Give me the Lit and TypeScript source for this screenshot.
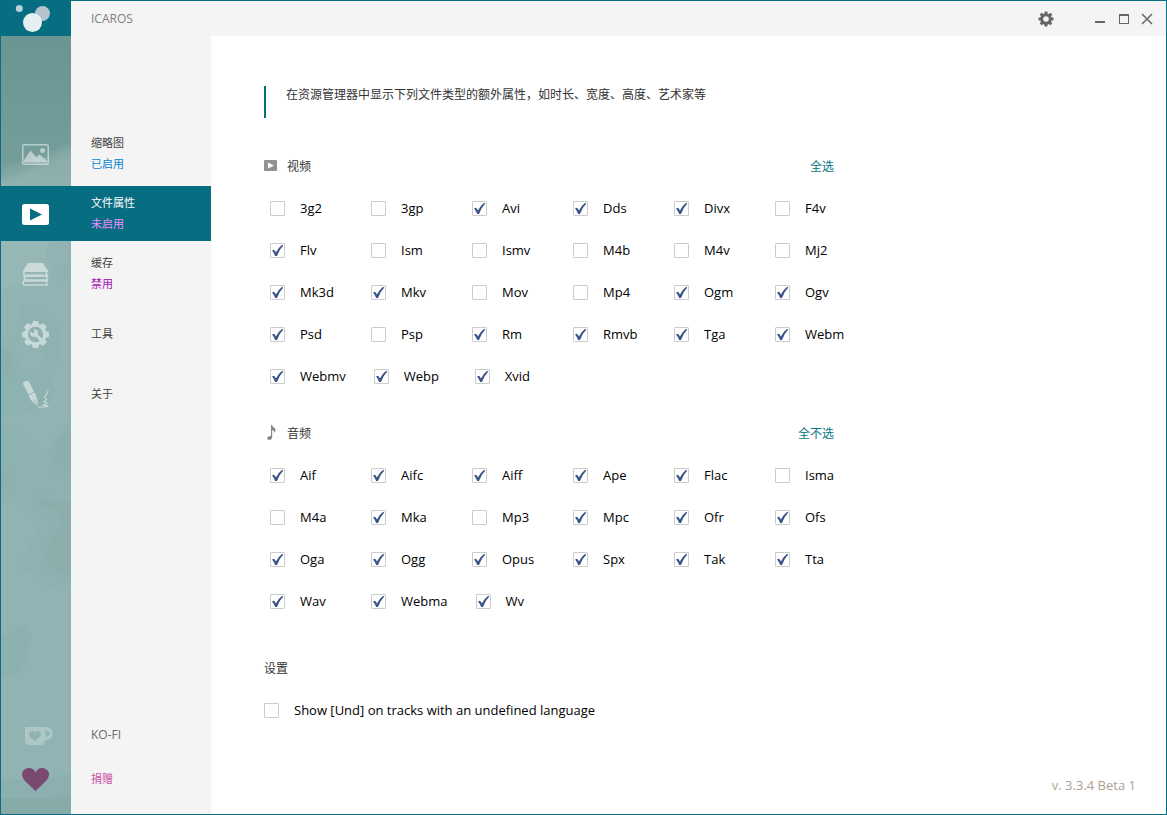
import { LitElement, html, css, svg, nothing } from "lit";
import type { TemplateResult } from "lit";
import { customElement, property, state } from "lit/decorators.js";
import { classMap } from "lit/directives/class-map.js";

interface Format {
  name: string;
  on: boolean;
}

/* "+" in front of a name means the format is ticked. */
const parse = (list: string): Format[] =>
  list.split(" ").map((n) => ({ name: n.replace("+", ""), on: n.startsWith("+") }));

const icons: Record<string, TemplateResult> = {
  image: html`<svg class="pale" width="27" height="21" viewBox="0 0 27 21">
    <rect x="0.75" y="0.75" width="25.5" height="19.5" rx="1.5" fill="none" stroke="#fff" stroke-width="1.5" />
    <path d="M2 18.500V16L8.500 6.500L14 13L17.500 10.500L25 16.500V18.500Z" fill="#fff" />
    <circle cx="20.500" cy="6.500" r="2.500" fill="#fff" />
  </svg>`,
  play: html`<svg width="27" height="21" viewBox="0 0 27 21">
    <rect width="27" height="21" rx="2.500" fill="#fff" />
    <path d="M8 4.500L20 10.500L8 16.500Z" fill="#076d80" />
  </svg>`,
  books: html`<svg class="pale" width="27" height="23" viewBox="0 0 27 23">
    <path d="M6 0H21L26 8H1Z" fill="#fff" />
    <g fill="none" stroke="#fff" stroke-width="1.500">
      <path d="M1 8.200H26M2.500 8.500Q0.500 12 3 12.200H26M24.500 8.500V12" />
      <path d="M26.500 13.200H4Q1.500 13.500 2.500 16Q2.800 17 4 17H26.500M25 13.500V17" />
      <path d="M26 18H3Q0.700 18.300 1 20.500Q1.300 22 3 22H26M24.500 18V22" />
    </g>
  </svg>`,
  tools: html`<svg class="pale" width="27" height="27" viewBox="-13.500 -13.500 27 27">
    <g fill="#fff">
      ${[0, 45, 90, 135, 180, 225, 270, 315].map(
        (a) => svg`<path transform="rotate(${a})" d="M-3.800 -9L-2.800 -12.800Q-2.500 -13.500 -1.800 -13.500H1.800Q2.500 -13.500 2.800 -12.800L3.800 -9Z" />`
      )}
      <path fill-rule="evenodd" d="M-10.700 0A10.700 10.700 0 0 0 10.700 0A10.700 10.700 0 0 0 -10.700 0ZM-7.700 0A7.700 7.700 0 0 1 7.700 0A7.700 7.700 0 0 1 -7.700 0Z" />
      <path d="M-5.200 -3Q-6 2 -1.500 2.500L0.500 2.200L5.500 7.500L8 5.500L2.600 0.200Q3.200 -4.800 -1.500 -5.800L-1 -2.800L-2.500 -1.200Z" />
    </g>
  </svg>`,
  pen: html`<svg class="pale" width="27" height="27" viewBox="0 0 27 27">
    <path d="M1 2Q1 0.500 4 0Q6.500 -0.300 7.500 1.500L12 10.500L6.500 13.500L1.500 4Z" fill="#fff" />
    <path d="M6.800 14.300L12.200 11.300L13.500 13.500Q15.500 18 16 25.500Q10 21.500 7.500 16.500Z" fill="#fff" />
    <path d="M15.500 25L12 18.500" stroke="#8fb2b2" stroke-width="0.800" />
    <path d="M26 9.500Q26.500 12 22.800 15.200Q21.500 16.500 24 17Q26 18 22 20.500Q21.500 21.500 24.500 21.500Q26.500 22.500 20 24Q23 24.500 26 24.500Q27 26.200 16 26.200" fill="none" stroke="#fff" stroke-width="1.100" />
  </svg>`,
  cup: html`<svg class="faint" width="28" height="18" viewBox="0 0 28 18">
    <path fill="#fff" fill-rule="evenodd" d="M1 0H21Q28 0.500 28 7Q27.500 12.500 20.500 13Q19 18 15.500 18H4Q0 18 0 13.500V1.200Q0 0 1 0ZM20.500 3.500V9.800Q24.500 9.500 24.500 6.600Q24.500 3.800 20.500 3.500ZM10 14.500L15.200 9.300Q17 6.500 15 4.800Q12 3 10 5.800Q8 3 5.200 4.800Q3 6.500 4.800 9.300Z" />
  </svg>`,
  heart: html`<svg width="27" height="23" viewBox="0 0 27 23">
    <path d="M13.500 23L3 13Q-1.500 8 0.700 3.500Q3 0 7 0Q11.500 0 13.500 4.500Q15.500 0 20 0Q24 0 26.300 3.500Q28.500 8 24 13Z" fill="#7b496f" />
  </svg>`,
};

@customElement("side-item")
class SideItem extends LitElement {
  @property() icon = "";
  @property() label = "";
  @property() status = "";
  @property() tone = "";
  @property({ type: Boolean }) active = false;
  @property({ type: Boolean }) small = false;

  static styles = css`
    :host {
      display: block;
    }
    .item {
      display: grid;
      grid-template-columns: 70px 1fr;
      align-items: center;
      height: 55px;
      color: #3f3f3f;
      text-decoration: none;
      line-height: 21px;
    }
    .small {
      height: 44px;
    }
    .active {
      background: #076d80;
      color: #fff;
    }
    .icon {
      display: grid;
      place-items: center;
      padding: 1px 1px 0 0;
    }
    .text {
      display: grid;
      padding: 0 0 1px 20px;
    }
    .pale {
      opacity: 0.5;
    }
    .faint {
      opacity: 0.25;
      margin-left: 6px;
    }
    .blue {
      color: #0a84cf;
    }
    .pink {
      color: #f08cff;
    }
    .purple {
      color: #a80fb5;
    }
    .rose {
      color: #cc4fa8;
    }
    .grey {
      color: #6a6a6a;
      font-size: 12px;
    }
  `;

  render() {
    return html`<a
      href="#${this.icon}"
      class=${classMap({ item: true, active: this.active, small: this.small })}
    >
      <span class="icon">${icons[this.icon]}</span>
      <span class="text">
        <span class=${this.status ? "" : this.tone}>${this.label}</span>
        ${this.status ? html`<span class=${this.tone}>${this.status}</span>` : nothing}
      </span>
    </a>`;
  }
}

const box = css`
  .check {
    display: flex;
    align-items: center;
    gap: 15px;
    height: 15px;
    font-size: 13px;
    line-height: 15px;
    color: #000;
    white-space: nowrap;
  }
  .check input {
    appearance: none;
    flex: none;
    width: 15px;
    height: 15px;
    margin: 0;
    border: 1px solid #cccccc;
    border-radius: 1px;
    background: #fff;
  }
  .check input:checked {
    background: #fff
      url("data:image/svg+xml,%3Csvg xmlns='http://www.w3.org/2000/svg' viewBox='0 0 13 13'%3E%3Cpath d='M1 6.600L3 5.700Q4.300 6.800 4.900 8.600Q7.500 3.500 11.200 0.800L12.200 1.800Q8.300 5.500 6 12H4.200Q3 9 1 6.600Z' fill='%233b5488'/%3E%3C/svg%3E")
      center / 13px 13px no-repeat;
  }
`;

@customElement("format-group")
class FormatGroup extends LitElement {
  @property() icon = "";
  @property() heading = "";
  @property() action = "";
  @state() private formats: Format[] = [];
  @property() list = "";

  static styles = [
    box,
    css`
      :host {
        display: block;
      }
      .head {
        display: flex;
        align-items: center;
        max-width: 570px;
        height: 24px;
        margin-bottom: 23px;
        font-size: 12px;
      }
      .glyph {
        width: 23px;
        padding-bottom: 1px;
      }
      .glyph svg {
        display: block;
      }
      h2 {
        flex: 1;
        margin: 0;
        padding-top: 2px;
        font-size: 12px;
        font-weight: 400;
      }
      .action {
        padding: 2px 0 0;
        border: 0;
        background: none;
        color: #077587;
        font: inherit;
      }
      .list {
        display: flex;
        flex-wrap: wrap;
        row-gap: 27px;
        max-width: 620px;
        margin: 0;
        padding-left: 6px;
        list-style: none;
      }
      .cell {
        box-sizing: border-box;
        min-width: 101px;
        padding-right: 28px;
      }
    `,
  ];

  willUpdate(changed: Map<string, unknown>) {
    if (changed.has("list")) this.formats = parse(this.list);
  }

  private setAll() {
    const on = this.formats.some((f) => !f.on);
    this.formats = this.formats.map((f) => ({ ...f, on }));
  }

  private toggle(i: number) {
    this.formats = this.formats.map((f, n) => (n === i ? { ...f, on: !f.on } : f));
  }

  render() {
    return html`
      <div class="head">
        <span class="glyph">
          ${this.icon === "video"
            ? html`<svg width="13" height="11" viewBox="0 0 13 11">
                <rect width="13" height="11" rx="1" fill="#929292" />
                <path d="M4 2.500L10 5.500L4 8.500Z" fill="#fff" />
              </svg>`
            : html`<svg width="13" height="15" viewBox="0 0 13 15">
                <path d="M7 0H8Q8.500 2 10.500 3Q12.500 5 10.500 8Q10.500 5.500 8.200 5V12Q8 15 5 15Q3 14.800 3.200 12.800Q4 10.800 7 11Z" fill="#868686" />
              </svg>`}
        </span>
        <h2>${this.heading}</h2>
        <button class="action" @click=${this.setAll}>${this.action}</button>
      </div>
      <ul class="list">
        ${this.formats.map(
          (f, i) => html`<li class="cell">
            <label class="check">
              <input type="checkbox" .checked=${f.on} @change=${() => this.toggle(i)} />
              ${f.name}
            </label>
          </li>`
        )}
      </ul>
    `;
  }
}

@customElement("app-root")
class AppRoot extends LitElement {
  static styles = [
    box,
    css`
      :host {
        display: grid;
        grid-template: 35px 1fr / 210px 1fr;
        box-sizing: border-box;
        min-height: 100vh;
        border: 1px solid #076d80;
        background: #fff;
        color: #333;
        font: 11px/18px "Open Sans", "Noto Sans CJK SC", sans-serif;
      }
      .bar {
        grid-column: 1 / -1;
        display: flex;
        align-items: center;
        background: #f4f4f4;
        color: #808080;
      }
      .logo {
        width: 70px;
        height: 35px;
        background: #076d80;
      }
      .title {
        flex: 1;
        padding-left: 20px;
        font-size: 12px;
      }
      .win {
        display: grid;
        place-items: center;
        width: 24px;
        height: 35px;
        padding: 0;
        border: 0;
        background: none;
      }
      .gear {
        margin-right: 30px;
      }
      .close {
        width: 22px;
        margin-right: 8px;
      }
      .side {
        display: flex;
        flex-direction: column;
        gap: 5px;
        padding: 90px 0 13px;
        background:
          url("data:image/svg+xml,%3Csvg xmlns='http://www.w3.org/2000/svg' width='70' height='778' viewBox='1 36 70 778'%3E%3Cdefs%3E%3ClinearGradient id='g' x2='0' y2='1'%3E%3Cstop offset='0' stop-color='%236b9593'/%3E%3Cstop offset='1' stop-color='%23759e9c'/%3E%3C/linearGradient%3E%3ClinearGradient id='h' x2='0' y2='1'%3E%3Cstop offset='0' stop-color='%2389abaa'/%3E%3Cstop offset='1' stop-color='%2399bab8'/%3E%3C/linearGradient%3E%3Cfilter id='b'%3E%3CfeGaussianBlur stdDeviation='2'/%3E%3C/filter%3E%3C/defs%3E%3Cpath fill='%2392b3b3' d='M1 36h70v778H1z'/%3E%3Cpath fill='url(%23g)' d='M1 36h70v140H1z'/%3E%3Cpath fill='url(%23h)' d='M1 176L71 148V241H1Z'/%3E%3Cpath fill='%2381a6a4' d='M1 168Q40 160 71 144V152Q40 167 1 180Z' filter='url(%23b)'/%3E%3Cpath fill='%2397b7b6' d='M1 241h70v20Q35 280 1 290Z'/%3E%3Cpath fill='%238aafaf' opacity='.45' d='M51 241Q35 262 71 286V241ZM20 308Q32 298 43 315Q62 320 61 340Q65 365 50 370Q42 345 20 320ZM1 343Q18 350 22 370Q30 380 52 372V400Q25 420 1 415ZM1 420Q20 430 43 455Q30 475 14 463L1 480ZM54 440L71 420V590H55Q35 575 22 568Q22 555 37 534Q34 515 18 503H1V465L43 455Z'/%3E%3Cg fill='%2388aba9' filter='url(%23b)'%3E%3Cpath opacity='.4' d='M1 345Q14 350 12 370L1 378ZM58 440L71 424V475Q54 468 52 460ZM1 465Q9 475 7 490H1Z'/%3E%3Cpath opacity='.6' d='M37 500Q50 500 71 502V575Q48 572 46 555Q52 532 65 524L55 510L37 505Z'/%3E%3C/g%3E%3Cpath fill='%238db0b1' d='M1 639L19 626Q31 621 31 638Q29 658 24 665Q14 678 1 677Z'/%3E%3Cpath fill='%238cb0af' d='M1 779Q35 783 71 773V814H1Z'/%3E%3Cpath fill='%2386aba9' d='M1 798Q35 800 71 795V814H1Z'/%3E%3C/svg%3E")
            left top / 70px 100% no-repeat,
          #f4f4f4;
      }
      .foot {
        margin-top: auto;
      }
      .main {
        display: flex;
        flex-direction: column;
        padding: 50px 30px 20px 53px;
        font-size: 12px;
      }
      .intro {
        box-sizing: border-box;
        min-height: 32px;
        margin: 0 0 36px;
        padding-left: 20px;
        border-left: 2px solid #076d80;
      }
      .audio {
        margin-top: 37px;
      }
      h2 {
        margin: 48px 0 22px;
        font-size: 12px;
        font-weight: 400;
        line-height: 24px;
      }
      .version {
        margin-top: auto;
        text-align: right;
        font-size: 13px;
        color: #ada193;
      }
    `,
  ];

  render() {
    return html`
      <header class="bar">
        <svg class="logo" viewBox="0 0 70 35">
          <circle cx="18.300" cy="7.500" r="3.500" fill="#b8d2d8" />
          <circle cx="41.500" cy="12.500" r="7.500" fill="#b3c4cc" />
          <circle cx="31.500" cy="21.500" r="9.500" fill="#e6eff2" />
        </svg>
        <span class="title">ICAROS</span>
        <button class="win gear" aria-label="Options">
          <svg width="16" height="16" viewBox="-8 -8 16 16" fill="#666">
            ${[0, 45, 90, 135, 180, 225, 270, 315].map(
              (a) => svg`<path transform="rotate(${a})" d="M-1.900 -4.500L-1.300 -7.500H1.300L1.900 -4.500Z" />`
            )}
            <circle r="4.200" fill="none" stroke="#666" stroke-width="2.800" />
          </svg>
        </button>
        <button class="win" aria-label="Minimize">
          <svg width="12" height="12" viewBox="0 0 12 12"><path d="M1 8H11V10H1Z" fill="#666" /></svg>
        </button>
        <button class="win" aria-label="Maximize">
          <svg width="12" height="12" viewBox="0 0 12 12">
            <path d="M1 1H11V11H1ZM2 3V10H10V3Z" fill="#666" fill-rule="evenodd" />
          </svg>
        </button>
        <button class="win close" aria-label="Close">
          <svg width="12" height="12" viewBox="0 0 12 12">
            <path d="M1 1L11 11M11 1L1 11" stroke="#666" stroke-width="1.500" />
          </svg>
        </button>
      </header>

      <nav class="side">
        <side-item icon="image" label="缩略图" status="已启用" tone="blue"></side-item>
        <side-item icon="play" label="文件属性" status="未启用" tone="pink" active></side-item>
        <side-item icon="books" label="缓存" status="禁用" tone="purple"></side-item>
        <side-item icon="tools" label="工具"></side-item>
        <side-item icon="pen" label="关于"></side-item>
        <div class="foot">
          <side-item icon="cup" label="KO-FI" tone="grey" small></side-item>
          <side-item icon="heart" label="捐赠" tone="rose" small></side-item>
        </div>
      </nav>

      <main class="main">
        <p class="intro">在资源管理器中显示下列文件类型的额外属性，如时长、宽度、高度、艺术家等</p>
        <format-group
          icon="video"
          heading="视频"
          action="全选"
          list="3g2 3gp +Avi +Dds +Divx F4v +Flv Ism Ismv M4b M4v Mj2 +Mk3d +Mkv Mov Mp4 +Ogm +Ogv +Psd Psp +Rm +Rmvb +Tga +Webm +Webmv +Webp +Xvid"
        ></format-group>
        <format-group
          class="audio"
          icon="audio"
          heading="音频"
          action="全不选"
          list="+Aif +Aifc +Aiff +Ape +Flac Isma M4a +Mka Mp3 +Mpc +Ofr +Ofs +Oga +Ogg +Opus +Spx +Tak +Tta +Wav +Webma +Wv"
        ></format-group>
        <h2>设置</h2>
        <label class="check">
          <input type="checkbox" />
          Show [Und] on tracks with an undefined language
        </label>
        <span class="version">v. 3.3.4 Beta 1</span>
      </main>
    `;
  }
}
